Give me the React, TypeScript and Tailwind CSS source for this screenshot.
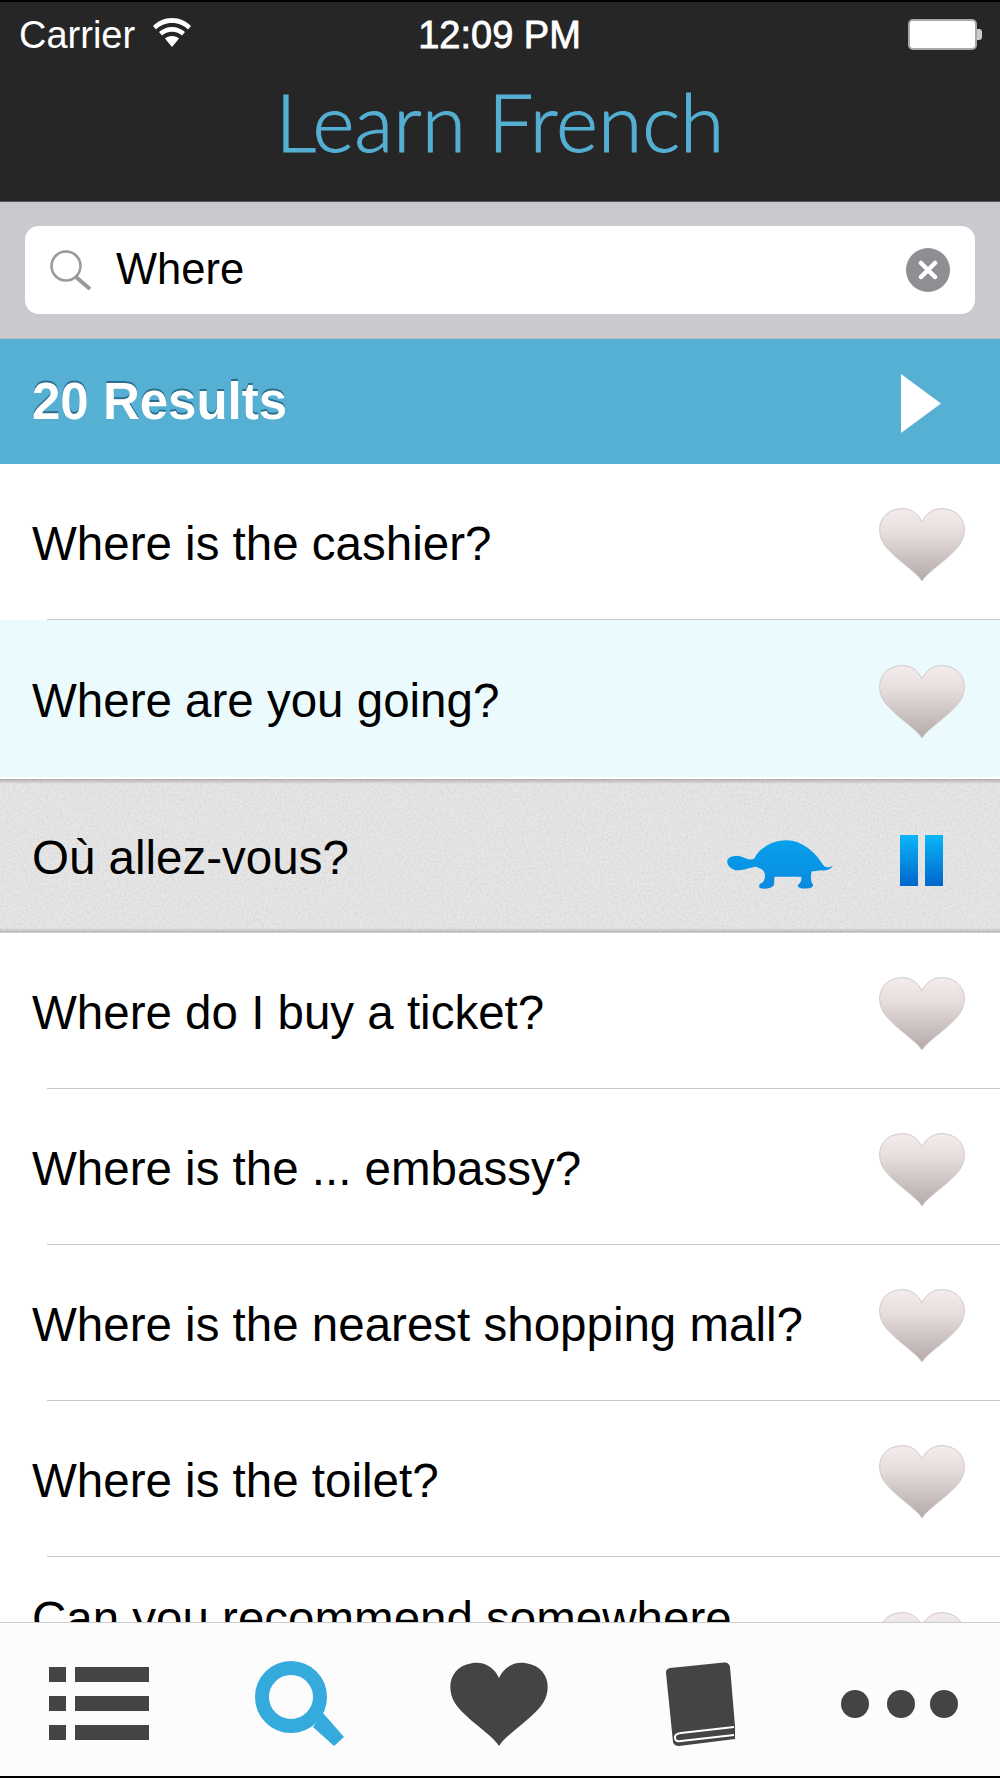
import { useId } from 'react';

const HEART = 'M44 74 C38 64 14 50 5 36 C-3 22 1 4 20 1 C31 -1 40 5 44 14 C48 5 57 -1 68 1 C87 4 91 22 83 36 C74 50 50 64 44 74Z';

function WifiIcon() {
  return (
    <svg width="38" height="29" viewBox="0 0 38 29" fill="#fff" className="-mt-[6px] ml-[1px]">
      <path d="M19 0 C27 0 33 3 38 8 L35 11.500 C31 7.500 25.500 5 19 5 C12.500 5 7 7.500 3 11.500 L0 8 C5 3 11 0 19 0Z" />
      <path d="M19 9 C24.500 9 28.500 11 32 14 L29 17.500 C26.500 15.200 23 13.800 19 13.800 C15 13.800 11.500 15.200 9 17.500 L6 14 C9.500 11 13.500 9 19 9Z" />
      <path d="M19 18 C22 18 24.500 19 26 20.500 L19 29 L12 20.500 C13.500 19 16 18 19 18Z" />
    </svg>
  );
}

function Heart() {
  const id = useId();
  return (
    <svg width="90" height="75" viewBox="0 -1 88 76" className="shrink-0 mr-[33px] mt-[6px]">
      <defs>
        <linearGradient id={id} x1="0" y1="0" x2="0" y2="1">
          <stop offset="0" stopColor="#f4ecec" />
          <stop offset="0.3" stopColor="#e8dfdf" />
          <stop offset="1" stopColor="#b5a9a9" />
        </linearGradient>
      </defs>
      <path d={HEART} fill={`url(#${id})`} stroke="#cfc8c8" strokeWidth="1" />
    </svg>
  );
}

function Row({ text }: { text: string }) {
  return (
    <div>
      <div className="flex items-center justify-between h-[155px] pl-[32px]">
        <span className="text-[47.500px] text-black mt-[4px]">{text}</span>
        <Heart />
      </div>
      <div className="ml-[47px] h-px bg-[#c8c7cc]" />
    </div>
  );
}

function Turtle() {
  const id = useId();
  return (
    <svg width="106" height="49" viewBox="0 0 318 146" className="mt-[7px]">
      <defs>
        <linearGradient id={id} x1="0" y1="0" x2="0" y2="1">
          <stop offset="0" stopColor="#08a0ec" />
          <stop offset="1" stopColor="#0a8ae0" />
        </linearGradient>
      </defs>
      <path
        fill={`url(#${id})`}
        d="M1 60 C6 48 30 44 50 52 C62 58 72 60 82 55 C95 28 130 0 178 0 C225 0 265 36 287 72 C296 84 305 84 318 76 C310 90 295 92 282 90 L254 94 C250 108 252 124 256 130 C262 138 254 146 235 145 C214 146 206 136 218 130 C224 122 224 114 222 110 L142 110 C142 122 142 130 140 136 C132 146 115 146 102 145 C92 142 96 130 106 128 C114 118 116 108 112 96 C108 88 95 82 85 80 C60 86 40 92 25 90 C10 86 -2 74 1 60 Z"
      />
    </svg>
  );
}

function Noise() {
  const id = useId();
  return (
    <svg className="absolute inset-0 w-full h-full opacity-[0.09]">
      <filter id={id}>
        <feTurbulence type="fractalNoise" baseFrequency="0.45" numOctaves="3" seed="4" />
        <feColorMatrix values="0 0 0 0 0  0 0 0 0 0  0 0 0 0 0  0.9 0.9 0 0 -0.75" />
      </filter>
      <rect width="100%" height="100%" filter={`url(#${id})`} />
    </svg>
  );
}

function PlayingRow() {
  const id = useId();
  return (
    <div className="relative flex items-center h-[154px] pl-[32px] bg-[linear-gradient(to_bottom,#b3b1b1_0px,#e6e6e6_5px,#e6e6e6_calc(100%-5px),#bcbbbb_calc(100%-1px),#e6e6e6_100%)]">
      <Noise />
      <span className="relative text-[47.500px] text-black flex-1 mt-[4px]">Où allez-vous?</span>
      <div className="relative flex items-center mr-[57px] mt-[9px] gap-[67px]">
        <Turtle />
        <svg width="43" height="51" viewBox="0 0 43 51">
          <defs>
            <linearGradient id={id} x1="0" y1="0" x2="0" y2="1">
              <stop offset="0" stopColor="#0ab6f7" />
              <stop offset="1" stopColor="#0066cc" />
            </linearGradient>
          </defs>
          <rect x="0" y="0" width="18" height="51" fill={`url(#${id})`} />
          <rect x="25" y="0" width="18" height="51" fill={`url(#${id})`} />
        </svg>
      </div>
    </div>
  );
}

export default function App() {
  return (
    <div className="w-[1000px] h-[1778px] flex flex-col overflow-hidden bg-white font-['Liberation_Sans',sans-serif]">
      {/* Header */}
      <div className="h-[2px] bg-black shrink-0" />
      <header className="h-[200px] shrink-0 bg-[#262626] border-b border-[#555]">
        <div className="grid grid-cols-3 items-center h-[60px] pl-[19px] pr-[18px] pt-[5px] text-white text-[38px]">
          <div className="flex items-center gap-[17px]">
            <span>Carrier</span>
            <WifiIcon />
          </div>
          <div className="text-center text-[38px] -ml-[2px] [-webkit-text-stroke:0.8px_white]">12:09 PM</div>
          <div className="flex items-center justify-end -mt-[3px]">
            <div className="w-[69px] h-[31px] bg-white rounded-[5px] border-2 border-[#aaa]" />
            <div className="w-[5px] h-[11px] bg-[#ccc] rounded-r-[3px]" />
          </div>
        </div>
        <h1 className="text-center text-[80.500px] leading-[80px] font-light text-[#54afd3] font-['Lato',sans-serif] mt-[19px] [-webkit-text-stroke:1px_#54afd3]">
          Learn French
        </h1>
      </header>

      {/* Search */}
      <div className="h-[137px] shrink-0 bg-[#c9c9ce] flex items-center px-[25px] border-b border-[#b8b8bd]">
        <div className="flex items-center w-full h-[88px] bg-white rounded-[14px] pl-[25px] pr-[25px]">
          <svg width="42" height="40" viewBox="0 0 42 40" fill="none" stroke="#999" className="shrink-0">
            <circle cx="16" cy="16" r="14.500" strokeWidth="2.500" />
            <path d="M26 27 L40 39" strokeWidth="4" />
          </svg>
          <span className="flex-1 text-[43.500px] text-black ml-[24px]">Where</span>
          <div className="w-[44px] h-[44px] rounded-full bg-[#8e8e93] flex items-center justify-center">
            <svg width="20" height="20" viewBox="0 0 20 20" stroke="#fff" strokeWidth="4.500" strokeLinecap="round">
              <path d="M3 3 L17 17 M17 3 L3 17" />
            </svg>
          </div>
        </div>
      </div>

      {/* Results bar */}
      <div className="h-[125px] shrink-0 bg-[#55b0d4] flex items-center justify-between pl-[32px] pr-[59px]">
        <span className="text-[51px] font-bold text-white [text-shadow:0_-2px_0_#2b6f8f] mt-[2px]">20 Results</span>
        <svg width="40" height="59" viewBox="0 0 40 59" className="mt-[3px]">
          <path d="M0 0 L40 29.500 L0 59Z" fill="#fff" />
        </svg>
      </div>

      {/* List */}
      <div className="flex-1 overflow-hidden">
        <Row text="Where is the cashier?" />
        <div className="flex items-center justify-between h-[157px] pl-[32px] bg-[#ebfafc]">
          <span className="text-[47.500px] text-black mt-[4px]">Where are you going?</span>
          <Heart />
        </div>
        <div className="h-[2px] bg-white" />
        <PlayingRow />
        <Row text="Where do I buy a ticket?" />
        <Row text="Where is the ... embassy?" />
        <Row text="Where is the nearest shopping mall?" />
        <Row text="Where is the toilet?" />
        <div className="flex items-center justify-between h-[176px] pl-[32px]">
          <span className="text-[47.500px] text-black mb-[52px]">Can you recommend somewhere</span>
          <Heart />
        </div>
      </div>

      {/* Tab bar */}
      <nav className="h-[154px] shrink-0 grid grid-cols-5 items-center bg-[#fcfcfc] border-t border-[#cccccc]">
        <div className="flex justify-center pt-[8px] pr-[2px]">
          <svg width="100" height="73" viewBox="0 0 100 73" fill="#444">
            <rect x="0" y="0" width="17" height="15" />
            <rect x="26" y="0" width="74" height="15" />
            <rect x="0" y="29" width="17" height="15" />
            <rect x="26" y="29" width="74" height="15" />
            <rect x="0" y="58" width="17" height="15" />
            <rect x="26" y="58" width="74" height="15" />
          </svg>
        </div>
        <div className="flex justify-center pt-[8px]">
          <svg width="90" height="86" viewBox="0 0 90 86">
            <circle cx="36" cy="36" r="29" fill="none" stroke="#35abdd" strokeWidth="14" />
            <path d="M58 66 L68 52 L89 76 L79 85Z" fill="#35abdd" />
          </svg>
        </div>
        <div className="flex justify-center pt-[8px] pr-[2px]">
          <svg width="100" height="84" viewBox="0 0 88 74">
            <path d={HEART} fill="#444" />
          </svg>
        </div>
        <div className="flex justify-center pt-[8px]">
          <svg width="70" height="84" viewBox="0 0 70 84">
            <path d="M5 6 L59 0.500 Q64 0 65 5 L70 64 L70 77 L14 84 Q9 84 8 80 L1 11 Q0.500 7 5 6 Z" fill="#444" />
            <path d="M69 65 L16 71 Q9 72 10 76 Q10 80 16 79 L69 73" fill="none" stroke="#fff" strokeWidth="2" />
          </svg>
        </div>
        <div className="flex justify-center pt-[8px]">
          <svg width="118" height="28" viewBox="0 0 118 28" fill="#444">
            <circle cx="14" cy="14" r="14" />
            <circle cx="60" cy="14" r="14" />
            <circle cx="103" cy="14" r="14" />
          </svg>
        </div>
      </nav>
      <div className="h-[2px] bg-black shrink-0" />
    </div>
  );
}
